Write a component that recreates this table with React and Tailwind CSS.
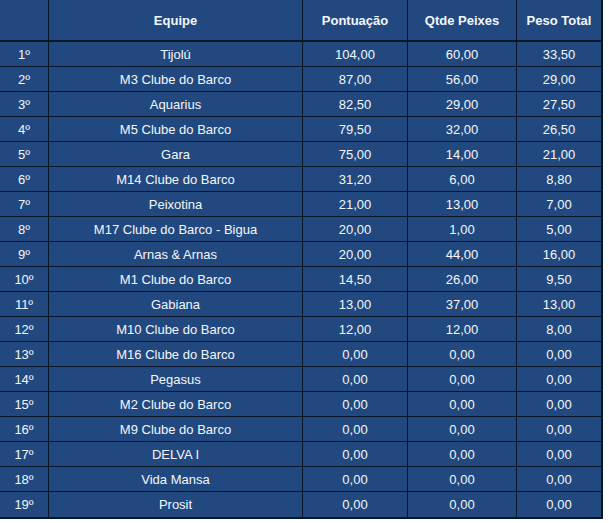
const rows = [
    ["1º", "Tijolú", "104,00", "60,00", "33,50"],
    ["2º", "M3 Clube do Barco", "87,00", "56,00", "29,00"],
    ["3º", "Aquarius", "82,50", "29,00", "27,50"],
    ["4º", "M5 Clube do Barco", "79,50", "32,00", "26,50"],
    ["5º", "Gara", "75,00", "14,00", "21,00"],
    ["6º", "M14 Clube do Barco", "31,20", "6,00", "8,80"],
    ["7º", "Peixotina", "21,00", "13,00", "7,00"],
    ["8º", "M17 Clube do Barco - Bigua", "20,00", "1,00", "5,00"],
    ["9º", "Arnas & Arnas", "20,00", "44,00", "16,00"],
    ["10º", "M1 Clube do Barco", "14,50", "26,00", "9,50"],
    ["11º", "Gabiana", "13,00", "37,00", "13,00"],
    ["12º", "M10 Clube do Barco", "12,00", "12,00", "8,00"],
    ["13º", "M16 Clube do Barco", "0,00", "0,00", "0,00"],
    ["14º", "Pegasus", "0,00", "0,00", "0,00"],
    ["15º", "M2 Clube do Barco", "0,00", "0,00", "0,00"],
    ["16º", "M9 Clube do Barco", "0,00", "0,00", "0,00"],
    ["17º", "DELVA I", "0,00", "0,00", "0,00"],
    ["18º", "Vida Mansa", "0,00", "0,00", "0,00"],
    ["19º", "Prosit", "0,00", "0,00", "0,00"],
];

const headers = ["", "Equipe", "Pontuação", "Qtde Peixes", "Peso Total"];

const App = () => {
    return (
        <div className="w-[609px] h-[523px] bg-white font-['Liberation_Sans',Arial,sans-serif]">
            <div className="w-[603px] bg-[#21497f] border-r-2 border-b-2 border-[#0a1628] grid grid-cols-[49px_254px_105px_109px_84px] text-[13px] text-[#f4f6fa]">
                {headers.map((h, i) => (
                    <div
                        key={i}
                        className={`h-[42px] pt-[2px] flex items-center justify-center font-bold border-b-2 border-[#0a1628] ${i < 4 ? "border-r" : ""}`}
                    >
                        {h}
                    </div>
                ))}
                {rows.map((r, ri) =>
                    r.map((c, ci) => (
                        <div
                            key={`${ri}-${ci}`}
                            className={`h-[25px] pt-px flex items-center justify-center border-[#0a1628] ${ri < rows.length - 1 ? "border-b" : ""} ${ci < 4 ? "border-r" : ""}`}
                        >
                            {c}
                        </div>
                    ))
                )}
            </div>
        </div>
    );
};

export default App;
